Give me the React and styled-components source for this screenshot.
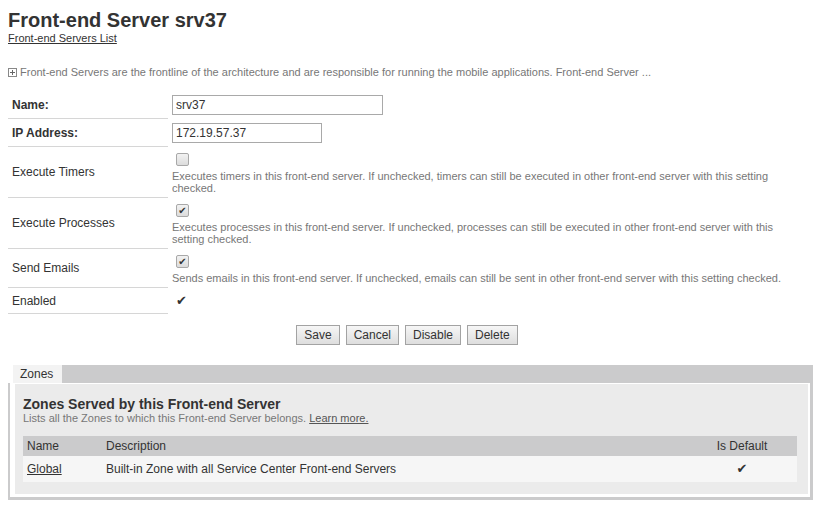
import * as React from "react"
import styled, { createGlobalStyle } from "styled-components"

const GlobalStyle = createGlobalStyle`
  body {
    margin: 8px;
    background: #fff;
    font-family: "Liberation Sans", Arial, sans-serif;
    font-size: 12px;
    color: #333;
  }
`

const Title = styled.h1`
  margin: 0;
  font-size: 20px;
  line-height: 24px;
  font-weight: 700;
  color: #333;
`

const Crumb = styled.div`
  font-size: 11px;
  line-height: 13px;

  a {
    color: #333;
    text-decoration: underline;
  }
`

const Intro = styled.div`
  display: flex;
  align-items: center;
  gap: 3px;
  margin-top: 21px;
  font-size: 11px;
  line-height: 13px;
  color: #777;
`

const FormGrid = styled.div`
  display: grid;
  grid-template-columns: 160px 1fr;
  width: 798px;
  margin-top: 12px;
`

const Label = styled.div`
  display: flex;
  align-items: center;
  padding-left: 4px;
  border-bottom: 1px solid #d6d6d6;
  font-size: 12px;
  font-weight: ${(p) => (p.$bold ? 700 : 400)};
  color: #333;
`

const Value = styled.div`
  padding: 4px;
  font-size: 12px;
  color: #333;
`

const TextInput = styled.input`
  box-sizing: border-box;
  display: block;
  width: ${(p) => p.$width}px;
  height: 20px;
  margin: 0;
  padding: 0 3px;
  border: 1px solid #a9a9a9;
  font-family: "Liberation Sans", Arial, sans-serif;
  font-size: 12px;
  color: #333;
  background: #fff;
  outline: none;
`

const Checkbox = styled.span`
  box-sizing: border-box;
  display: flex;
  align-items: center;
  justify-content: center;
  width: 13px;
  height: 13px;
  margin: 2px 0 4px 4px;
  border: 1px solid #a8a8a8;
  border-radius: 2px;
  background: linear-gradient(#f2f2f2, #dcdcdc);
  font-family: "DejaVu Sans", sans-serif;
  font-size: 10px;
  line-height: 1;
  color: #333;
`

const Help = styled.div`
  font-size: 11px;
  line-height: 12px;
  color: #777;
`

const Tick = styled.span`
  display: inline-block;
  padding-left: ${(p) => p.$indent || 0}px;
  font-family: "DejaVu Sans", sans-serif;
  font-size: 13px;
  line-height: 18px;
  color: #333;
`

const ButtonRow = styled.div`
  display: flex;
  justify-content: center;
  gap: 6px;
  width: 798px;
  margin-top: 11px;
`

const Button = styled.button`
  height: 20px;
  padding: 0 7px;
  border: 1px solid #a3a3a3;
  border-radius: 0;
  background: linear-gradient(#f6f6f6, #dedede);
  font-family: "Liberation Sans", Arial, sans-serif;
  font-size: 12px;
  color: #333;
`

const Panel = styled.div`
  width: 806px;
  margin: 20px 0 0 -1px;
`

const TabBar = styled.div`
  display: flex;
  height: 18px;
  padding-left: 6px;
`

const Tab = styled.div`
  display: flex;
  align-items: center;
  padding: 0 7px;
  width: 35px;
  background: #f3f3f3;
  font-size: 12px;
  color: #333;
`

const TabFiller = styled.div`
  flex: 1;
  background: #cbcbcc;
`

const PanelBody = styled.div`
  border: 3px solid #cbcbcc;
  border-top: none;
  padding: 0 1px 2px 4px;
`

const PanelContent = styled.div`
  background: #ebebeb;
  border: 1px solid #fff;
  padding: 12px 11px 12px 8px;
`

const SectionTitle = styled.h2`
  margin: 0;
  font-size: 14px;
  line-height: 16px;
  font-weight: 700;
  color: #333;
`

const SectionNote = styled.div`
  font-size: 11px;
  line-height: 13px;
  color: #777;

  a {
    color: #555;
    text-decoration: underline;
  }
`

const Table = styled.div`
  margin-top: 11px;
  font-size: 12px;
  color: #333;
`

const TableRow = styled.div`
  display: grid;
  grid-template-columns: 79px 1fr 110px;
  align-items: center;
  height: ${(p) => (p.$head ? 20 : 26)}px;
  background: ${(p) => (p.$head ? "#cbcbcc" : "#f6f6f6")};
`

const Cell = styled.div`
  padding-left: ${(p) => (p.$center ? 0 : 4)}px;
  text-align: ${(p) => (p.$center ? "center" : "left")};

  a {
    color: #333;
    text-decoration: underline;
  }
`

const PlusIcon = () => (
  <svg width="9" height="9" viewBox="0 0 9 9">
    <rect x="0.5" y="0.5" width="8" height="8" fill="#fff" stroke="#888" />
    <path d="M2 4.5h5M4.5 2v5" stroke="#666" />
  </svg>
)

const settings = [
  {
    label: "Execute Timers",
    checked: false,
    help: "Executes timers in this front-end server. If unchecked, timers can still be executed in other front-end server with this setting checked.",
  },
  {
    label: "Execute Processes",
    checked: true,
    help: "Executes processes in this front-end server. If unchecked, processes can still be executed in other front-end server with this setting checked.",
  },
  {
    label: "Send Emails",
    checked: true,
    help: "Sends emails in this front-end server. If unchecked, emails can still be sent in other front-end server with this setting checked.",
  },
]

const App = () => {
  return (
    <>
      <GlobalStyle />
      <Title>Front-end Server srv37</Title>
      <Crumb>
        <a>Front-end Servers List</a>
      </Crumb>
      <Intro>
        <PlusIcon />
        Front-end Servers are the frontline of the architecture and are
        responsible for running the mobile applications. Front-end Server ...
      </Intro>

      <FormGrid>
        <Label $bold>Name:</Label>
        <Value>
          <TextInput $width={211} defaultValue="srv37" />
        </Value>
        <Label $bold>IP Address:</Label>
        <Value>
          <TextInput $width={150} defaultValue="172.19.57.37" />
        </Value>
        {settings.map((s) => (
          <React.Fragment key={s.label}>
            <Label>{s.label}</Label>
            <Value>
              <Checkbox>{s.checked ? "✔" : ""}</Checkbox>
              <Help>{s.help}</Help>
            </Value>
          </React.Fragment>
        ))}
        <Label>Enabled</Label>
        <Value>
          <Tick $indent={4}>✔</Tick>
        </Value>
      </FormGrid>

      <ButtonRow>
        <Button>Save</Button>
        <Button>Cancel</Button>
        <Button>Disable</Button>
        <Button>Delete</Button>
      </ButtonRow>

      <Panel>
        <TabBar>
          <Tab>Zones</Tab>
          <TabFiller />
        </TabBar>
        <PanelBody>
          <PanelContent>
            <SectionTitle>Zones Served by this Front-end Server</SectionTitle>
            <SectionNote>
              Lists all the Zones to which this Front-end Server belongs.{" "}
              <a>Learn more.</a>
            </SectionNote>
            <Table>
              <TableRow $head>
                <Cell>Name</Cell>
                <Cell>Description</Cell>
                <Cell $center>Is Default</Cell>
              </TableRow>
              <TableRow>
                <Cell>
                  <a>Global</a>
                </Cell>
                <Cell>Built-in Zone with all Service Center Front-end Servers</Cell>
                <Cell $center>
                  <Tick>✔</Tick>
                </Cell>
              </TableRow>
            </Table>
          </PanelContent>
        </PanelBody>
      </Panel>
    </>
  )
}

export default App
